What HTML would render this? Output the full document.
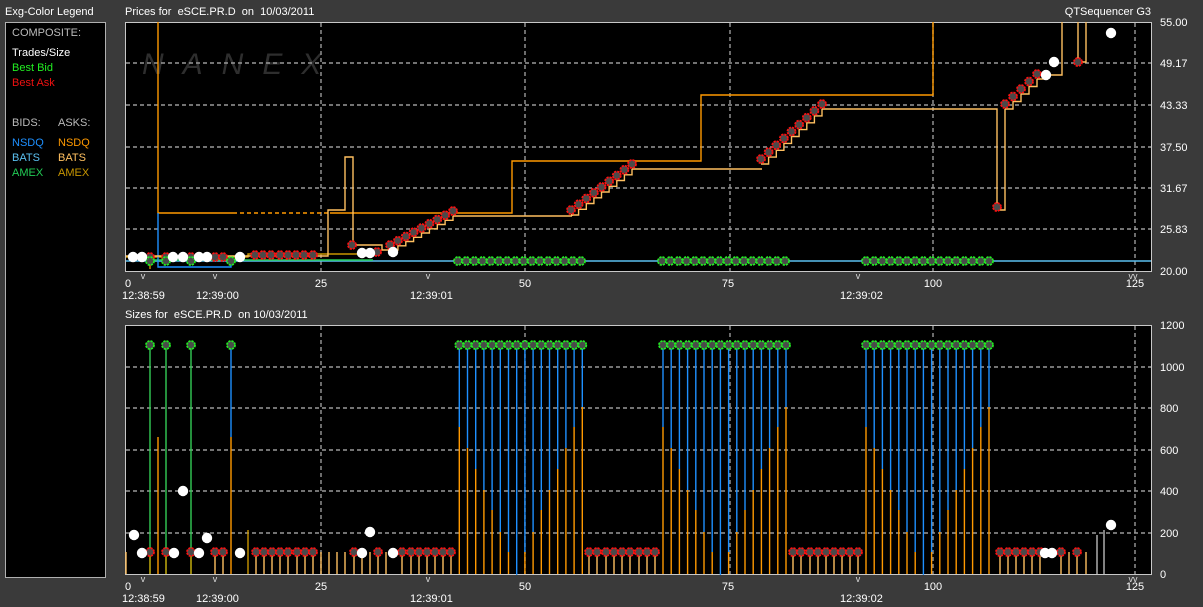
<!DOCTYPE html>
<html><head><meta charset="utf-8"><style>
body{margin:0;background:#3a3a3a;width:1203px;height:607px;overflow:hidden;font-family:"Liberation Sans",sans-serif}
svg{position:absolute;left:0;top:0}
text{font-family:"Liberation Sans",sans-serif;font-size:11px;fill:#fff;white-space:pre}
</style></head><body>
<svg id="s" width="1203" height="607" xmlns="http://www.w3.org/2000/svg" xml:space="preserve">
<rect x="0" y="0" width="1203" height="607" fill="#3a3a3a"/>
<text x="5" y="15">Exg-Color Legend</text>
<text x="125" y="15">Prices for  eSCE.PR.D  on  10/03/2011</text>
<text x="1151" y="15" text-anchor="end">QTSequencer G3</text>
<text x="125" y="318">Sizes for  eSCE.PR.D  on 10/03/2011</text>
<rect x="5.5" y="22.5" width="100" height="555" fill="#000" stroke="#b0b0b0"/>
<text x="12" y="36" style="fill:#bbb">COMPOSITE:</text>
<text x="12" y="56">Trades/Size</text>
<text x="12" y="71" style="fill:#22ee22">Best Bid</text>
<text x="12" y="86" style="fill:#ee1111">Best Ask</text>
<text x="12" y="126" style="fill:#bbb">BIDS:</text>
<text x="58" y="126" style="fill:#bbb">ASKS:</text>
<text x="12" y="146" style="fill:#1e90ff">NSDQ</text>
<text x="58" y="146" style="fill:#ff9900">NSDQ</text>
<text x="12" y="161" style="fill:#5bc0f0">BATS</text>
<text x="58" y="161" style="fill:#ffc060">BATS</text>
<text x="12" y="176" style="fill:#22cc55">AMEX</text>
<text x="58" y="176" style="fill:#c89600">AMEX</text>
<rect x="125.5" y="22.5" width="1026" height="249" fill="#000" stroke="#c8c8c8"/>
<rect x="125.5" y="325.5" width="1026" height="249" fill="#000" stroke="#c8c8c8"/>
<text x="142" y="74" style="fill:#2e2e2e;font-size:30px;font-style:italic;letter-spacing:19px">NANEX</text>
<g id="dyn"></g>
</svg>
<script>
var o='';
function L(x1,y1,x2,y2,c,d){o+='<line x1="'+x1+'" y1="'+y1+'" x2="'+x2+'" y2="'+y2+'" stroke="'+c+'" stroke-width="1.4"'+(d?' stroke-dasharray="4,3"':'')+'/>';}
function P(d,c){o+='<path d="'+d+'" fill="none" stroke="'+c+'" stroke-width="1.4"/>';}
function R(x,y){o+='<circle cx="'+x+'" cy="'+y+'" r="4" fill="#4a4a4a" stroke="#ff1010" stroke-width="1.8" stroke-dasharray="2.2,1"/>';}
function G(x,y){o+='<circle cx="'+x+'" cy="'+y+'" r="4" fill="#4a4a4a" stroke="#22ee22" stroke-width="1.8" stroke-dasharray="2.2,1"/>';}
function W(x,y){o+='<circle cx="'+x+'" cy="'+y+'" r="5.2" fill="#fff"/>';}
function T(x,y,t,a){o+='<text x="'+x+'" y="'+y+'"'+(a?' text-anchor="'+a+'"':'')+'>'+t+'</text>';}
var gx=[321,525,730,933,1135];
[63,105,147,188,229].forEach(function(y){L(126,y,1151,y,'#999',1)});
[367,408,450,491,533].forEach(function(y){L(126,y,1151,y,'#999',1)});
gx.forEach(function(x){L(x,23,x,271,'#999',1);L(x,326,x,574,'#999',1)});
var pl=['55.00','49.17','43.33','37.50','31.67','25.83','20.00'],py=[22,63,105,147,188,229,271];
pl.forEach(function(t,i){T(1160,py[i]+4,t)});
var sl=['1200','1000','800','600','400','200','0'],sy=[325,367,408,450,491,533,574];
sl.forEach(function(t,i){T(1160,sy[i]+4,t)});
[[0,0],[303,1]].forEach(function(a){var d=a[0];
T(125,d+287,'0');T(321,d+287,'25','middle');T(525,d+287,'50','middle');T(728,d+287,'75','middle');T(933,d+287,'100','middle');T(1135,d+287,'125','middle');
T(122,d+299,'12:38:59');T(196,d+299,'12:39:00');T(410,d+299,'12:39:01');T(840,d+299,'12:39:02');
[143,215,428,858].forEach(function(x){o+='<text x="'+x+'" y="'+(d+279)+'" text-anchor="middle" style="font-size:9px;fill:#ddd">v</text>'});
o+='<text x="1133" y="'+(d+279)+'" text-anchor="middle" style="font-size:9px;fill:#ddd">vv</text>';
});
L(126,261,1151,261,'#5bc0f0');
L(150,260,373,260,'#22cc55');
P('M126 257 H150 V269 M150 257 H248 V254 H357','#c89600');
P('M158 22 V213 H233','#ff9900');L(233,213,330,213,'#ff9900',1);
P('M330 213 H512 V161 H701 V95 H933 V22','#ff9900');
P('M158 213 V267 H231 V262','#1e90ff');
P('M126 256 H328 V210 H345 V157 H353 V245 H382 V250 H390','#ffc060');
function stair(x0,y0,x1,y1,n){var pts=[];for(var i=0;i<n;i++){pts.push([x0+(x1-x0)*i/(n-1),y0+(y1-y0)*i/(n-1)])}
var d='M'+pts[0][0]+' '+(pts[0][1]+5);for(var i=1;i<n;i++){d+=' H'+pts[i][0].toFixed(1)+' V'+(pts[i][1]+5).toFixed(1)}P(d,'#ffc060');return pts;}
var s1=stair(390,245,453,211,9);L(453,216,572,216,'#ffc060');L(572,216,572,214,'#ffc060');
var s2=stair(571,210,632,164,9);L(632,169,762,169,'#ffc060');
var s3=stair(761,159,822,104,9);
P('M822 109 H997 V210 H1005 V109','#ffc060');
var s4=stair(1005,104,1037,74,5);
P('M1037 79 H1046 V75 H1062 V22 M1078 22 V62 H1086 V22','#ffc060');
[s1,s2,s3,s4].forEach(function(s){s.forEach(function(p){R(p[0],p[1])})});
R(997,207);R(1078,62);
[255,263,271,280,288,296,304,313].forEach(function(x){R(x,255)});
[150,166,191,215,223].forEach(function(x){R(x,257)});
[150,166,191,231].forEach(function(x){G(x,261)});
R(352,245);R(377,252);
[133,142,173,183,199,207,240].forEach(function(x){W(x,257)});
W(362,253);W(370,253);W(393,252);W(1046,75);W(1054,62);W(1111,33);
function grp(a,b){for(var x=a;x<=b+1;x+=8.2)G(x,261)}
grp(458,583);grp(662,785);grp(866,989);
var tops=[427,448,469,490,510,532,552,575,552,532,510,490,469,448,427,407];
function bars(x0){for(var i=0;i<16;i++){var x=x0+i*8.2;L(x,345,x,tops[i],'#1e90ff');if(tops[i]<574)L(x,tops[i],x,574,'#ff9900');}
for(var i=0;i<16;i++)G(x0+i*8.2,345);}
bars(459.3);bars(663);bars(866);
[150,166,191].forEach(function(x){L(x,345,x,574,'#33cc55');G(x,345)});
L(231,345,231,437,'#1e90ff');L(231,437,231,574,'#ff9900');G(231,345);
L(158,437,158,574,'#ff9900');L(248,530,248,574,'#c89600');L(126,552,126,574,'#ffc060');
var reds=[150,166,191,215,223,256,264,272,280,288,297,305,313,354,378,402,411,419,427,435,443,451,589,597,606,614,622,630,639,647,655,793,801,810,818,826,834,842,850,858,1000,1008,1016,1024,1032,1040,1061,1077];
reds.forEach(function(x){L(x,552,x,574,x==150||x==166||x==191?'#c89600':'#ffc060')});
[321,329,337,345,362,370,386,1069,1086].forEach(function(x){L(x,552,x,574,'#ffc060')});
L(1097,535,1097,574,'#bbb');L(1104,530,1104,574,'#bbb');
reds.forEach(function(x){R(x,552)});
[[134,535],[142,553],[174,553],[183,491],[199,553],[207,538],[240,553],[362,553],[370,532],[393,553],[1045,553],[1052,553],[1111,525]].forEach(function(p){W(p[0],p[1])});
document.getElementById('dyn').innerHTML=o;
</script>
</body></html>
